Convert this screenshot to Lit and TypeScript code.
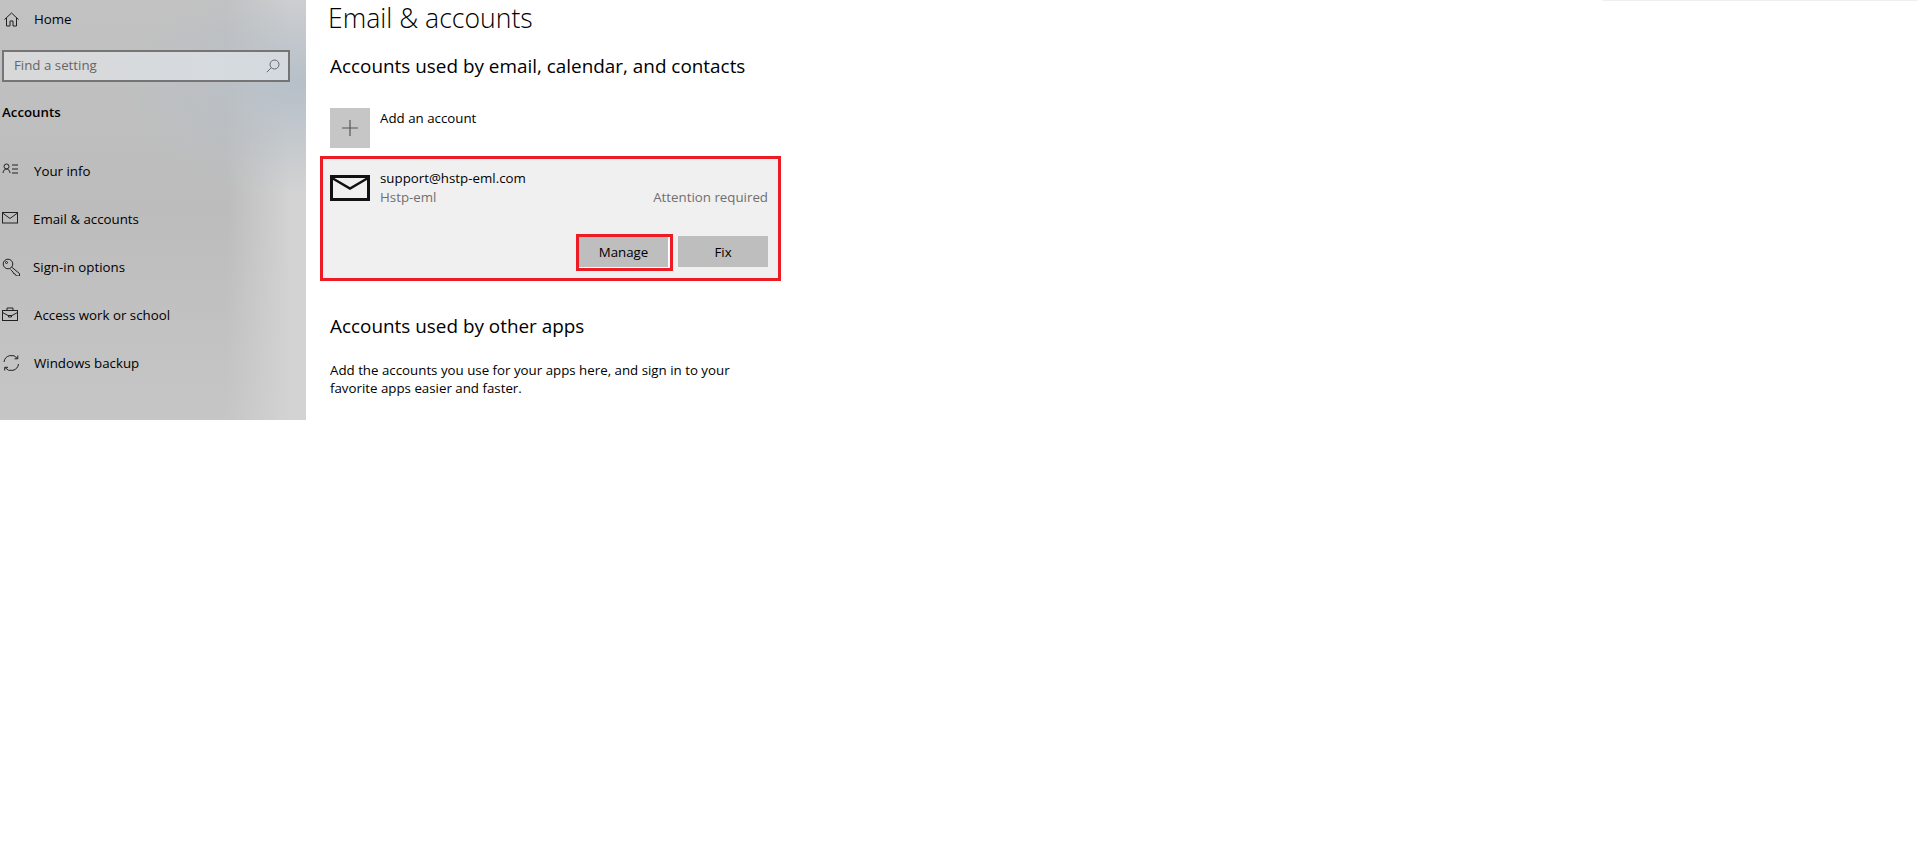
import { LitElement, html, css, svg } from "lit";
import { customElement } from "lit/decorators.js";

const icons: Record<string, unknown> = {
  info: svg`<circle cx="4.500" cy="4.500" r="2.500"/><path d="M1 11c.4-2.600 1.600-4 3.500-4s3.100 1.400 3.500 4M10 3h6M10 7h6M10 11h6"/>`,
  mail: svg`<rect x=".5" y="2.500" width="15" height="10.500"/><path d="M.5 3l7.500 5.500L15.500 3"/>`,
  key: svg`<circle cx="6" cy="6" r="4.800"/><circle cx="4.500" cy="4.500" r="1"/><path d="M9.500 9l8 6.500v2.500h-3l-1.500-2-1.500-.5-.5-1.500-2.500-2.500"/>`,
  work: svg`<rect x=".5" y="4.500" width="15" height="10"/><path d="M5 4.500V2h6v2.500M.5 6.500l5.500 3h4l5.500-3M6.500 9.500h3v1.500h-3z"/>`,
  sync: svg`<path d="M2 8a7.500 7.500 0 0 1 13.500-3.500M16.500 10a7.500 7.500 0 0 1-13.500 3.500M15.800 1.500v3.300h-3.300M2.700 16.500v-3.200H6"/>`,
};

@customElement("app-root")
export class AppRoot extends LitElement {
  static styles = css`
    :host { display: block; width: 1917px; height: 859px; background: #fff; color: #000;
      font-family: "Open Sans", "Noto Sans", sans-serif; font-size: 13.3px; overflow: hidden; }
    .page { display: flex; align-items: flex-start; height: 100%; }
    .side { box-sizing: border-box; width: 306px; height: 420px; flex: none; padding-top: 9px;
      background:
        radial-gradient(ellipse 170px 110px at 300px 85px, #b6bfc8 0%, rgba(182,191,200,0) 100%),
        linear-gradient(90deg, rgba(211,211,211,0) 74%, #d3d3d3 95%),
        linear-gradient(180deg, #c2c2c2 0%, #bcbcbc 50%, #c6c6c6 100%); }
    .home { display: flex; align-items: center; height: 20px; padding-left: 4px; color: #000; }
    .home svg { width: 15px; height: 15px; margin-right: 15px; fill: none; stroke: #222; stroke-width: 1; }
    .search { box-sizing: border-box; display: flex; align-items: center; justify-content: space-between;
      width: 288px; height: 32px; margin: 21px 0 0 2px; padding: 0 8px 0 10px;
      border: 2px solid #757575; background: linear-gradient(90deg, #d8d8d8, #d6dbe0 75%, #d4d9df); color: #666; }
    .search span { padding-bottom: 2px; }
    .search svg { width: 14px; height: 14px; fill: none; stroke: #666; stroke-width: 1; }
    .group { margin: 20px 0 0 2px; height: 20px; line-height: 20px; font-weight: 600; color: #000; }
    .nav { display: flex; flex-direction: column; margin-top: 25px; }
    .item { display: flex; align-items: center; height: 48px; color: #000; }
    .item svg { width: 18px; height: 18px; flex: none; margin: 0 14px 0 2px; fill: none; stroke: #222; stroke-width: 1; }
    .item.tight svg { margin-right: 13px; }
    .main { box-sizing: border-box; width: 461px; margin-left: 14px; flex: none; }
    h1 { margin: 0 0 0 8px; height: 36px; line-height: 36px; font-size: 26.6px; font-weight: 300; color: #000; }
    h2 { margin: 0 0 0 10px; font-size: 18.9px; line-height: 28px; font-weight: 400; color: #000; }
    .h-first { margin-top: 16px; }
    .add { display: flex; gap: 10px; margin: 28px 0 0 10px; height: 40px; }
    .tile { display: flex; align-items: center; justify-content: center; width: 40px; height: 40px; background: #c6c6c6; }
    .tile svg { width: 20px; height: 20px; stroke: #555; stroke-width: 1.200; }
    .add span { line-height: 20px; }
    .card { box-sizing: border-box; height: 125px; margin-top: 8px; border: 3px solid #ed1c24; background: #f0f0f0;
      padding: 10px 10px 0 7px; display: flex; flex-direction: column; }
    .acct { display: flex; height: 46px; gap: 10px; }
    .env { width: 40px; height: 26px; margin-top: 6px; flex: none; fill: none; stroke: #111; }
    .info { display: grid; grid-template-columns: 1fr auto; grid-auto-rows: 19px; flex: 1; line-height: 19px; }
    .mail { grid-column: 1 / 3; color: #000; }
    .sub { color: #6f6f6f; }
    .actions { display: flex; justify-content: flex-end; align-items: flex-start; gap: 5px; margin-top: 19px; }
    .btn { box-sizing: border-box; display: flex; align-items: center; justify-content: center; background: #bebebe; color: #000;
      width: 90px; height: 31px; }
    .fix { margin-top: 2px; }
    .mark { box-sizing: border-box; width: 97px; height: 37px; border: 3px solid #ed1c24; background: #fff; padding: 0 2px 1px 0; }
    .mark .btn { width: 100%; height: 100%; }
    .h-second { margin-top: 31px; }
    p { margin: 21px 0 0 10px; line-height: 18px; color: #000; width: 440px; }
    .edge { width: 314px; height: 1px; margin-left: auto; background: #eeeeee; flex: none; }
  `;

  render() {
    const items = [["info", "Your info", ""], ["mail", "Email & accounts", "tight"], ["key", "Sign-in options", "tight"], ["work", "Access work or school", ""], ["sync", "Windows backup", ""]];
    return html`<div class="page">
      <aside class="side">
        <div class="home"><svg viewBox="0 0 15 15"><path d="M.500 7.500L7.500 1l7 6.500M2.500 6v8h3.500V9h3v5h3.500V6"/></svg>Home</div>
        <div class="search"><span>Find a setting</span><svg viewBox="0 0 14 14"><circle cx="8.500" cy="5.500" r="4.500"/><path d="M5.200 8.800L.8 13.200"/></svg></div>
        <div class="group">Accounts</div>
        <nav class="nav">${items.map(([k, t, c]) => html`<div class="item ${c}"><svg viewBox="0 0 18 18">${icons[k]}</svg><span>${t}</span></div>`)}</nav>
      </aside>
      <main class="main">
        <h1>Email &amp; accounts</h1>
        <h2 class="h-first">Accounts used by email, calendar, and contacts</h2>
        <div class="add"><div class="tile"><svg viewBox="0 0 20 20"><path d="M10 2v16M2 10h16"/></svg></div><span>Add an account</span></div>
        <section class="card">
          <div class="acct">
            <svg class="env" viewBox="0 0 40 26"><rect x="1.500" y="1.500" width="37" height="23" stroke-width="3"/><path d="M2 3L20 13.500 38 3" stroke-width="2.500"/></svg>
            <div class="info"><span class="mail">support@hstp-eml.com</span><span class="sub">Hstp-eml</span><span class="sub">Attention required</span></div>
          </div>
          <div class="actions"><div class="mark"><div class="btn">Manage</div></div><div class="btn fix">Fix</div></div>
        </section>
        <h2 class="h-second">Accounts used by other apps</h2>
        <p>Add the accounts you use for your apps here, and sign in to your favorite apps easier and faster.</p>
      </main>
      <div class="edge"></div>
    </div>`;
  }
}
